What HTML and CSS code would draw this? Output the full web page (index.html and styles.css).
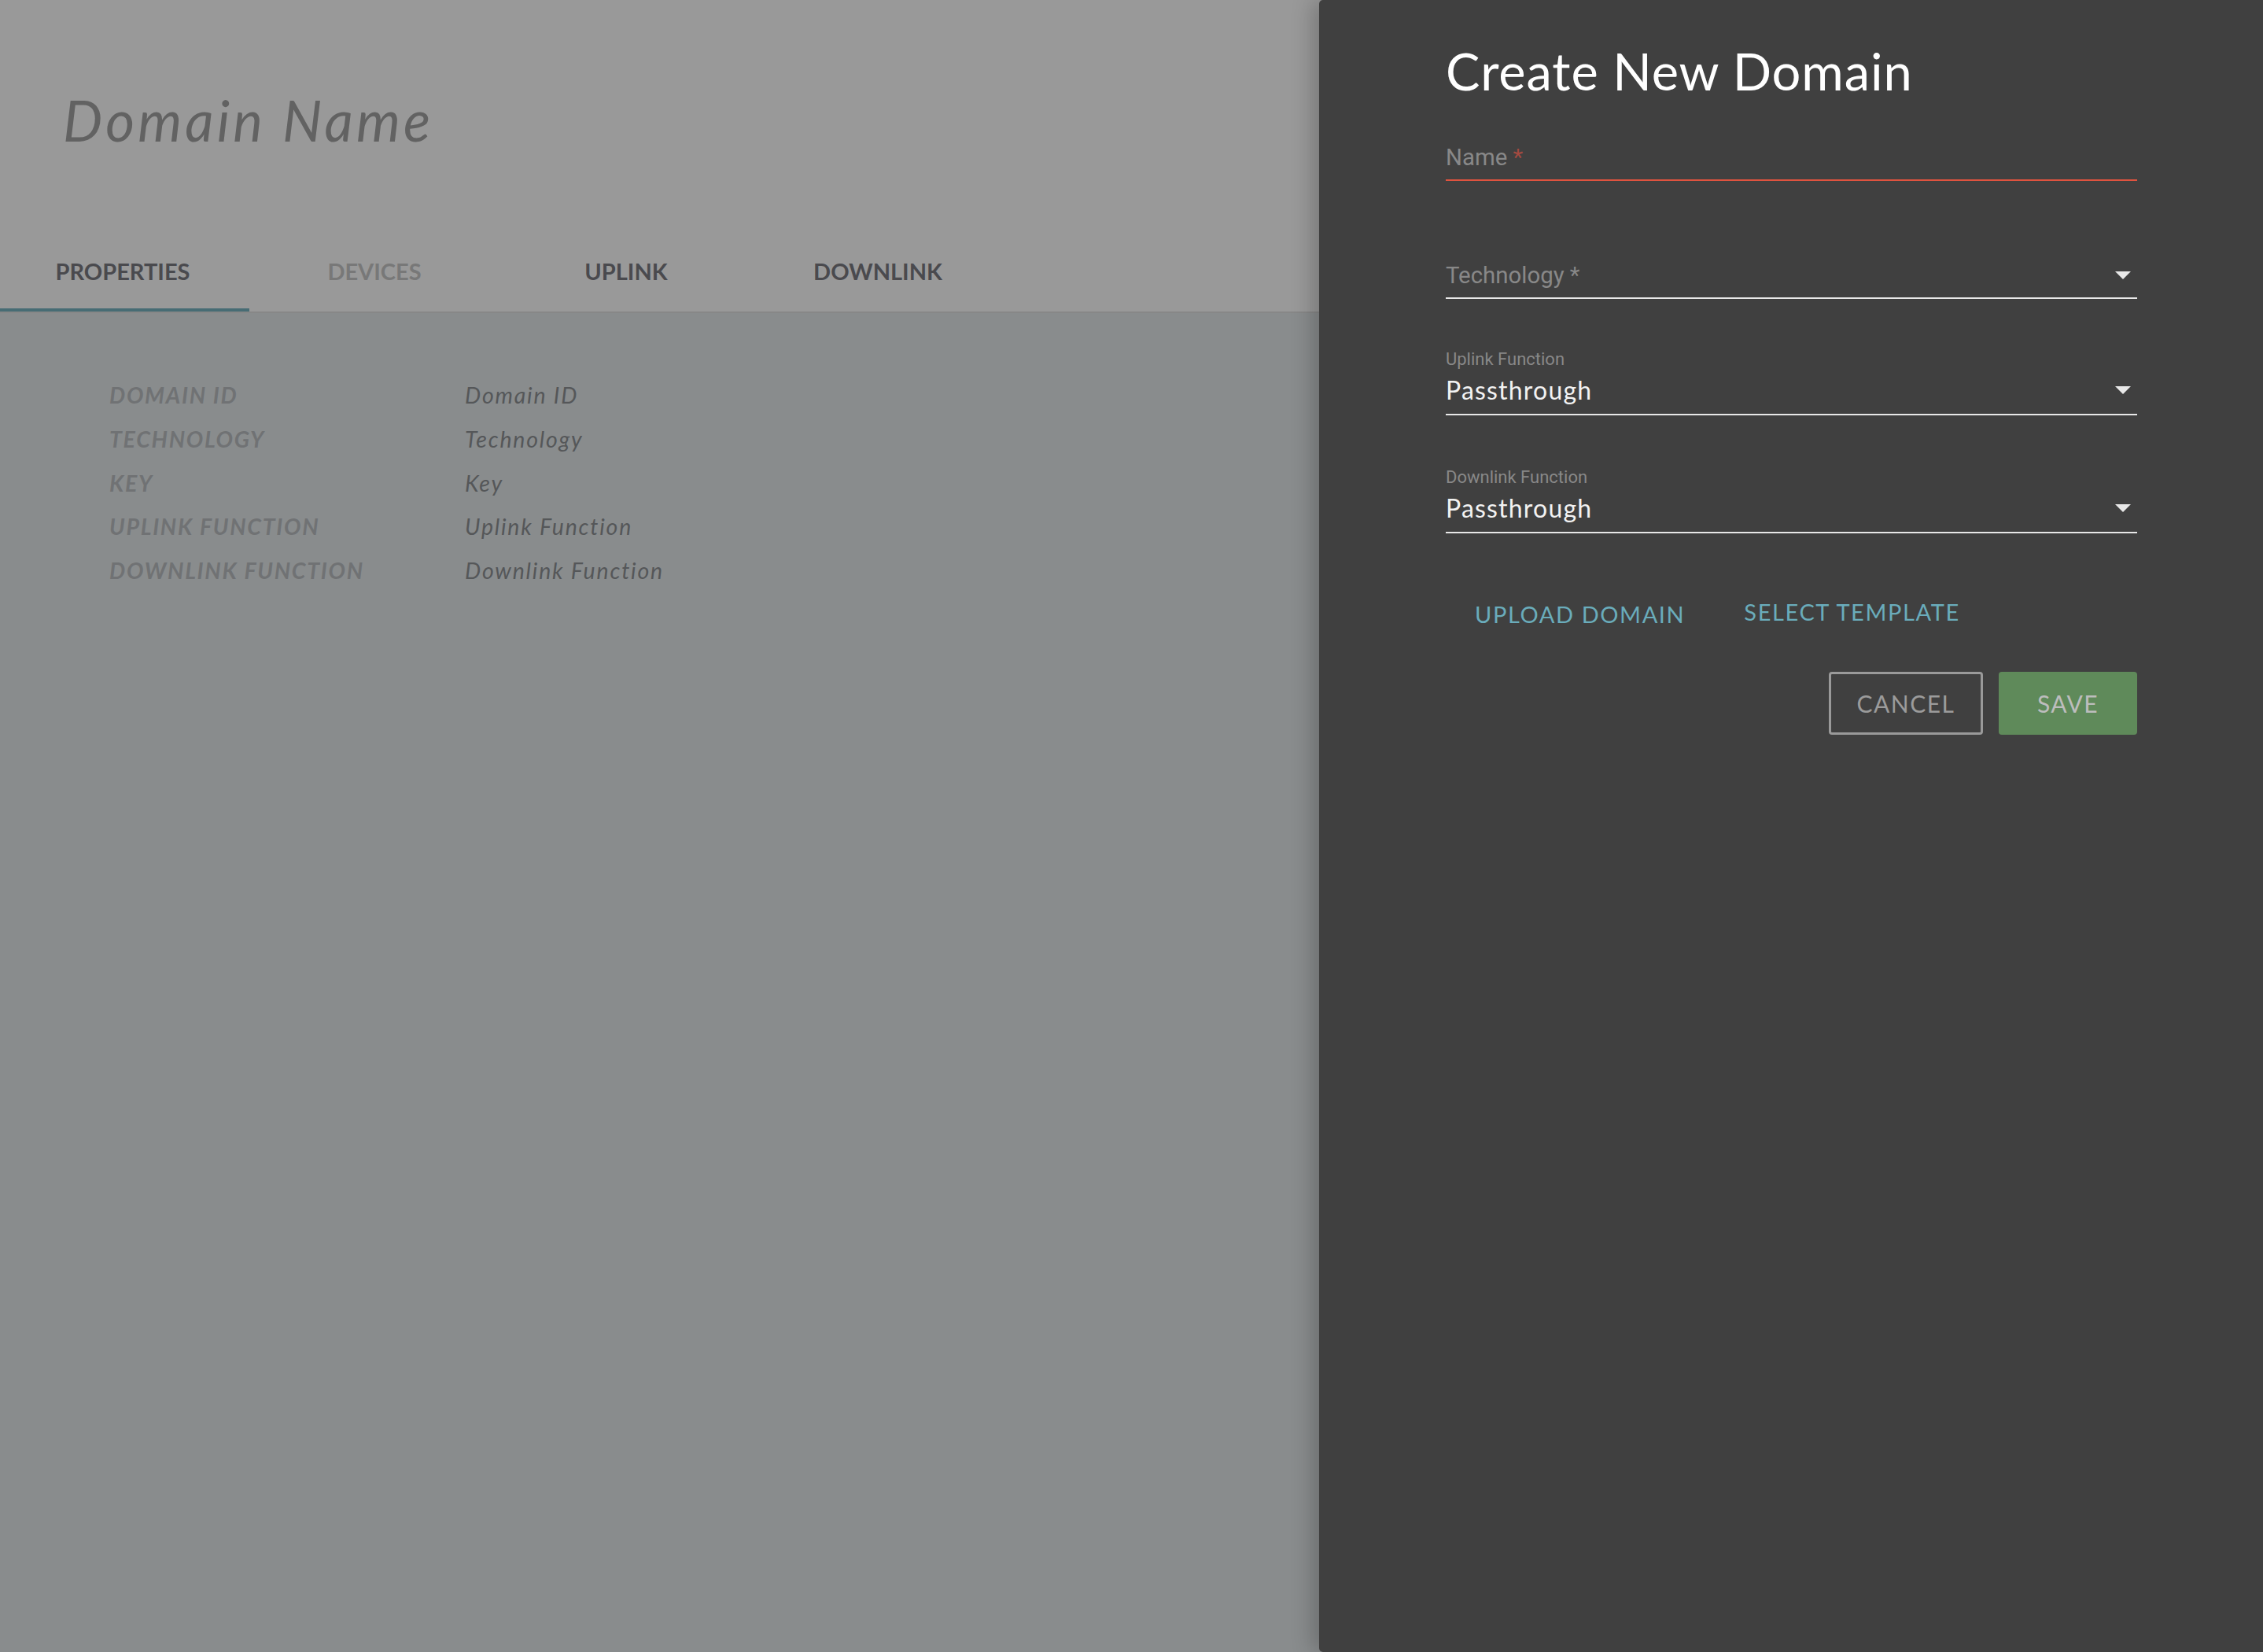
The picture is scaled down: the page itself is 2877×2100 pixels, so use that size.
FILE: index.html
```html
<!DOCTYPE html>
<html lang="en">
<head>
<meta charset="utf-8">
<title>Create New Domain</title>
<link rel="stylesheet" href="styles.css">
</head>
<body>
<div class="page">
  <header class="page-header">
    <h1 class="domain-title">Domain Name</h1>
    <nav class="tabs">
      <div class="tab tab-active">PROPERTIES<span class="tab-indicator"></span></div>
      <div class="tab tab-disabled">DEVICES</div>
      <div class="tab">UPLINK</div>
      <div class="tab">DOWNLINK</div>
    </nav>
  </header>
  <main class="page-body">
    <dl class="props">
      <dt class="prop-label">DOMAIN ID</dt><dd class="prop-value">Domain ID</dd>
      <dt class="prop-label">TECHNOLOGY</dt><dd class="prop-value">Technology</dd>
      <dt class="prop-label">KEY</dt><dd class="prop-value">Key</dd>
      <dt class="prop-label">UPLINK FUNCTION</dt><dd class="prop-value">Uplink Function</dd>
      <dt class="prop-label">DOWNLINK FUNCTION</dt><dd class="prop-value">Downlink Function</dd>
    </dl>
  </main>
</div>

<aside class="drawer">
  <h2 class="drawer-title">Create New Domain</h2>

  <div class="field field-name">
    <div class="field-row row-error">
      <span class="field-placeholder">Name <span class="req-error">*</span></span>
    </div>
  </div>

  <div class="field field-tech">
    <div class="field-row">
      <span class="field-placeholder">Technology *</span>
      <svg class="caret" width="20" height="10" viewBox="0 0 20 10"><polygon points="0,0 20,0 10,10" fill="#e8e8e8"/></svg>
    </div>
  </div>

  <div class="field field-select">
    <div class="float-label">Uplink Function</div>
    <div class="field-row value-row">
      <span class="field-value">Passthrough</span>
      <svg class="caret" width="20" height="10" viewBox="0 0 20 10"><polygon points="0,0 20,0 10,10" fill="#e8e8e8"/></svg>
    </div>
  </div>

  <div class="field field-select field-down">
    <div class="float-label">Downlink Function</div>
    <div class="field-row value-row">
      <span class="field-value">Passthrough</span>
      <svg class="caret" width="20" height="10" viewBox="0 0 20 10"><polygon points="0,0 20,0 10,10" fill="#e8e8e8"/></svg>
    </div>
  </div>

  <div class="link-row">
    <span class="link-btn link-upload">UPLOAD DOMAIN</span>
    <span class="link-btn link-template">SELECT TEMPLATE</span>
  </div>

  <div class="action-row">
    <button class="btn btn-cancel">CANCEL</button>
    <button class="btn btn-save">SAVE</button>
  </div>
</aside>
</body>
</html>
```

FILE: styles.css
```css
html, body {
  margin: 0;
  padding: 0;
}
body {
  width: 2877px;
  height: 2100px;
  overflow: hidden;
  background: #898c8d;
  font-family: "Lato", "Noto Sans", sans-serif;
  position: relative;
}

.page {
  width: 100%;
  height: 2100px;
  display: flex;
  flex-direction: column;
}

.page-header {
  background: #999999;
  height: 396px;
  border-bottom: 2px solid #878787;
  display: flex;
  flex-direction: column;
  box-sizing: content-box;
}

.domain-title {
  margin: 113px 0 0 80px;
  font-family: "Lato", sans-serif;
  font-style: italic;
  font-weight: 400;
  font-size: 71px;
  line-height: 80px;
  color: #626262;
  letter-spacing: 4.2px;
}

.tabs {
  margin-top: auto;
  display: flex;
  height: 88px;
}
.tab {
  position: relative;
  width: 320px;
  box-sizing: border-box;
  padding: 19px 8px 0 0;
  text-align: center;
  font-weight: 700;
  font-size: 29px;
  line-height: 36px;
  color: #4a4a4e;
}
.tab-disabled {
  color: #787878;
}
.tab-indicator {
  position: absolute;
  left: 0;
  bottom: 0;
  width: 317px;
  height: 4px;
  background: #476c74;
}

.page-body {
  flex: 1;
  padding: 77px 0 0 139px;
}
.props {
  margin: 0;
  display: grid;
  grid-template-columns: 452px auto;
  line-height: 55.75px;
  font-size: 28.5px;
  font-style: italic;
}
.prop-label {
  font-weight: 700;
  color: #707274;
  letter-spacing: 1.7px;
}
.prop-value {
  margin: 0;
  font-weight: 400;
  color: #555759;
  letter-spacing: 1.8px;
}

/* Drawer */
.drawer {
  position: absolute;
  top: 0;
  left: 1677px;
  width: 1200px;
  height: 2100px;
  box-sizing: border-box;
  padding: 57px 160px 0 161px;
  background: #404040;
  border-radius: 5px 0 0 5px;
  box-shadow: -8px 0 28px rgba(0, 0, 0, 0.22);
}

.drawer-title {
  margin: 0;
  font-weight: 400;
  font-size: 65px;
  line-height: 66px;
  color: #ffffff;
  letter-spacing: 0.9px;
}

.field-row {
  display: flex;
  align-items: center;
  justify-content: space-between;
  padding-bottom: 10px;
  border-bottom: 2px solid #e8e8e8;
  height: 36px;
  box-sizing: content-box;
}
.row-error {
  border-bottom-color: #e0533f;
}
.field-placeholder {
  font-family: "Roboto", sans-serif;
  font-size: 29.4px;
  line-height: 36px;
  color: #888888;
}
.req-error {
  color: #a34a40;
}
.caret {
  display: block;
  margin-right: 8px;
}

.field-name {
  margin-top: 59px;
}
.field-tech {
  margin-top: 102px;
}
.field-select {
  margin-top: 64px;
}
.field-down {
  margin-top: 66px;
}
.float-label {
  font-family: "Roboto", sans-serif;
  font-size: 22px;
  line-height: 26px;
  color: #888888;
  margin-bottom: 6px;
}
.value-row {
  height: 40px;
}
.field-value {
  font-size: 32px;
  line-height: 40px;
  color: #f2f2f2;
  letter-spacing: 1.2px;
}

.link-row {
  display: flex;
  align-items: flex-start;
  margin-top: 82px;
}
.link-btn {
  font-size: 29px;
  line-height: 36px;
  letter-spacing: 1.6px;
  color: #6aacbb;
}
.link-upload {
  margin: 3px 0 0 37px;
}
.link-template {
  margin-left: 75px;
}

.action-row {
  display: flex;
  justify-content: flex-end;
  gap: 20px;
  margin-top: 55px;
}
.btn {
  height: 80px;
  box-sizing: border-box;
  border-radius: 4px;
  font-family: "Lato", sans-serif;
  font-size: 30px;
  letter-spacing: 1.5px;
  padding: 0;
  cursor: pointer;
}
.btn-cancel {
  width: 196px;
  background: transparent;
  border: 3px solid #9a9a9a;
  color: #9b9b9b;
}
.btn-save {
  width: 176px;
  background: #5f8a5a;
  border: none;
  color: #bdbdbd;
}
```
